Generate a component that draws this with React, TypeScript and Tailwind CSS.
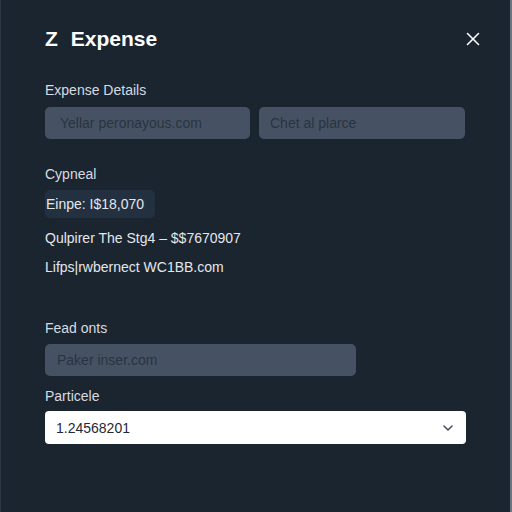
import { X, ChevronDown } from 'lucide-react';

export default function App() {
  return (
    <div
      className="flex h-[512px] w-[512px] flex-col border-l border-r-2 border-l-[#2a3744] border-r-[#6b7480] bg-[#1b2530] px-[44px] text-[14px] leading-[20px] text-[#e3e7ec]"
      style={{ fontFamily: '"Liberation Sans", Arial, sans-serif' }}
    >
      <header className="flex h-[78px] items-center justify-between">
        <h1 className="text-[21px] font-bold text-white">
          Z<span className="ml-[13px]">Expense</span>
        </h1>
        <button className="mr-[-18px] text-white">
          <X size={22} strokeWidth={1.7} />
        </button>
      </header>

      <section className="mt-[2px]">
        <p className="text-[#d6dbe1]">Expense Details</p>
        <div className="mt-[7px] flex gap-[9px] pr-[1px]">
          <div className="flex h-[32px] w-[205px] items-center rounded-[5px] bg-[#465263] pl-[15px] text-[#2a3440]">
            Yellar peronayous.com
          </div>
          <div className="flex h-[32px] flex-1 items-center rounded-[5px] bg-[#465263] pl-[11px] text-[#2a3440]">
            Chet al plarce
          </div>
        </div>
      </section>

      <section className="mt-[25px]">
        <p className="text-[#d6dbe1]">Cypneal</p>
        <div className="mt-[6px] inline-flex h-[28px] items-center rounded-[5px] bg-[#233040] pl-[1px] pr-[11px]">
          Einpe: I$18,070
        </div>
        <p className="mt-[10px]">Qulpirer The Stg4 – $$7670907</p>
        <p className="mt-[9px]">Lifps|rwbernect WC1BB.com</p>
      </section>

      <section className="mt-[41px]">
        <p className="text-[#d6dbe1]">Fead onts</p>
        <div className="mt-[6px] flex h-[32px] w-[311px] items-center rounded-[5px] bg-[#465263] pl-[12px] text-[#2a3440]">
          Paker inser.com
        </div>
        <p className="mt-[10px] text-[#d6dbe1]">Particele</p>
        <div className="mt-[5px] flex h-[33px] items-center justify-between rounded-[4px] bg-white pl-[11px] pr-[10px] text-[#1f2937]">
          <span>1.24568201</span>
          <ChevronDown size={16} strokeWidth={2} className="text-[#374151]" />
        </div>
      </section>
    </div>
  );
}
